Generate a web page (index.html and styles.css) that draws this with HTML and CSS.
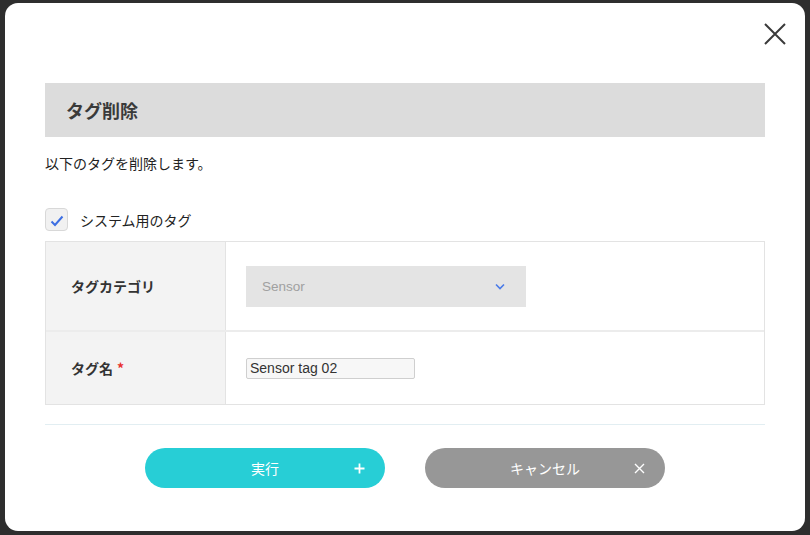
FILE: index.html
```html
<!DOCTYPE html>
<html lang="ja">
<head>
<meta charset="utf-8">
<link rel="stylesheet" href="styles.css">
</head>
<body>
<div class="modal">
  <div class="close-row">
    <button class="close" aria-label="close">
      <svg width="22" height="22" viewBox="0 0 22 22"><path d="M1 1 L21 21 M21 1 L1 21" stroke="#3a3a3a" stroke-width="2" fill="none"/></svg>
    </button>
  </div>
  <div class="title-bar"><h1 class="title">タグ削除</h1></div>
  <p class="desc">以下のタグを削除します。</p>
  <div class="check-row">
    <span class="checkbox">
      <svg width="14" height="12" viewBox="0 0 14 12"><path d="M1.5 6.5 L5 10 L12.5 1.5" stroke="#3d6fe3" stroke-width="2" fill="none"/></svg>
    </span>
    <span class="check-label">システム用のタグ</span>
  </div>
  <div class="form-table">
    <div class="row row-1">
      <div class="label">タグカテゴリ</div>
      <div class="value">
        <div class="select">
          <span>Sensor</span>
          <svg width="10" height="7" viewBox="0 0 10 7"><path d="M1 1.5 L5 5.5 L9 1.5" stroke="#4a7be8" stroke-width="1.6" fill="none"/></svg>
        </div>
      </div>
    </div>
    <div class="row row-2">
      <div class="label">タグ名 <span class="req">*</span></div>
      <div class="value">
        <div class="input">Sensor tag 02</div>
      </div>
    </div>
  </div>
  <div class="divider"></div>
  <div class="actions">
    <button class="btn btn-run"><span class="btn-text">実行</span><span class="btn-icon">
      <svg width="11" height="11" viewBox="0 0 11 11"><path d="M5.5 0.5 V10.5 M0.5 5.5 H10.5" stroke="#fff" stroke-width="1.8" fill="none"/></svg>
    </span></button>
    <button class="btn btn-cancel"><span class="btn-text">キャンセル</span><span class="btn-icon">
      <svg width="11" height="11" viewBox="0 0 11 11"><path d="M1 1 L10 10 M10 1 L1 10" stroke="#fff" stroke-width="1.4" fill="none"/></svg>
    </span></button>
  </div>
</div>
</body>
</html>
```
FILE: styles.css
```css
* { box-sizing: border-box; }
html, body { margin: 0; padding: 0; }
body {
  width: 810px;
  height: 535px;
  background: #2e2e2e;
  font-family: "Noto Sans CJK JP", "Liberation Sans", sans-serif;
  color: #333;
  padding: 3px 5px 4px 5px;
  overflow: hidden;
}
.modal {
  background: #fff;
  border-radius: 13px;
  height: 528px;
  padding: 0 40px;
  display: flex;
  flex-direction: column;
}
.close-row {
  display: flex;
  justify-content: flex-end;
  height: 80px;
  padding-top: 20px;
  margin-right: -21px;
}
.close {
  width: 22px;
  height: 22px;
  padding: 0;
  border: 0;
  background: none;
  display: block;
}
.close svg { display: block; }
.title-bar {
  background: #dcdcdc;
  height: 54px;
  display: flex;
  align-items: center;
  padding-left: 21px;
}
.title {
  margin: 0;
  font-size: 18px;
  font-weight: 700;
  color: #3a3a3a;
  line-height: 1;
}
.desc {
  margin: 16px 0 0 0;
  font-size: 14px;
  line-height: 20px;
  color: #222;
}
.check-row {
  margin-top: 35px;
  display: flex;
  align-items: center;
  height: 23px;
}
.checkbox {
  width: 23px;
  height: 23px;
  border: 1px solid #d8d8d8;
  border-radius: 4px;
  background: #f1f1f1;
  display: flex;
  align-items: center;
  justify-content: center;
}
.checkbox svg { display: block; margin-top: 2px; }
.check-label {
  margin-left: 12px;
  font-size: 14px;
  color: #222;
}
.form-table {
  margin-top: 10px;
  border: 1px solid #e3e3e3;
}
.row {
  display: flex;
}
.row-1 { height: 90px; border-bottom: 2px solid #ececec; }
.row-2 { height: 72px; }
.label {
  width: 180px;
  background: #f3f3f3;
  border-right: 1px solid #e3e3e3;
  display: flex;
  align-items: center;
  padding-left: 25px;
  font-size: 14px;
  font-weight: 700;
  color: #333;
}
.req { color: #e8302f; margin-left: 4px; }
.value {
  flex: 1;
  display: flex;
  align-items: center;
  padding-left: 20px;
}
.select {
  width: 280px;
  height: 41px;
  background: #e4e4e4;
  display: flex;
  align-items: center;
  justify-content: space-between;
  padding: 0 21px 0 16px;
  font-family: "Liberation Sans", sans-serif;
  font-size: 13.5px;
  color: #a0a0a0;
}
.select svg { display: block; }
.input {
  width: 169px;
  height: 21px;
  background: #f7f7f7;
  border: 1px solid #cfcfcf;
  border-radius: 2px;
  font-family: "Liberation Sans", sans-serif;
  font-size: 14px;
  color: #333;
  padding: 0 3px;
  line-height: 18px;
  margin-top: 1px;
}
.divider {
  margin-top: 19px;
  height: 1px;
  background: #e2eef2;
}
.actions {
  display: flex;
  justify-content: center;
  gap: 40px;
  margin-top: 23px;
}
.btn {
  position: relative;
  width: 240px;
  height: 40px;
  border: 0;
  border-radius: 20px;
  color: #fff;
  font-family: "Noto Sans CJK JP", "Liberation Sans", sans-serif;
  font-size: 14px;
  display: flex;
  align-items: center;
  justify-content: center;
  padding: 0;
}
.btn-run { background: #27ced6; }
.btn-cancel { background: #979797; }
.btn-icon {
  position: absolute;
  right: 20px;
  top: 0;
  height: 40px;
  display: flex;
  align-items: center;
}
.btn-icon svg { display: block; }
```
